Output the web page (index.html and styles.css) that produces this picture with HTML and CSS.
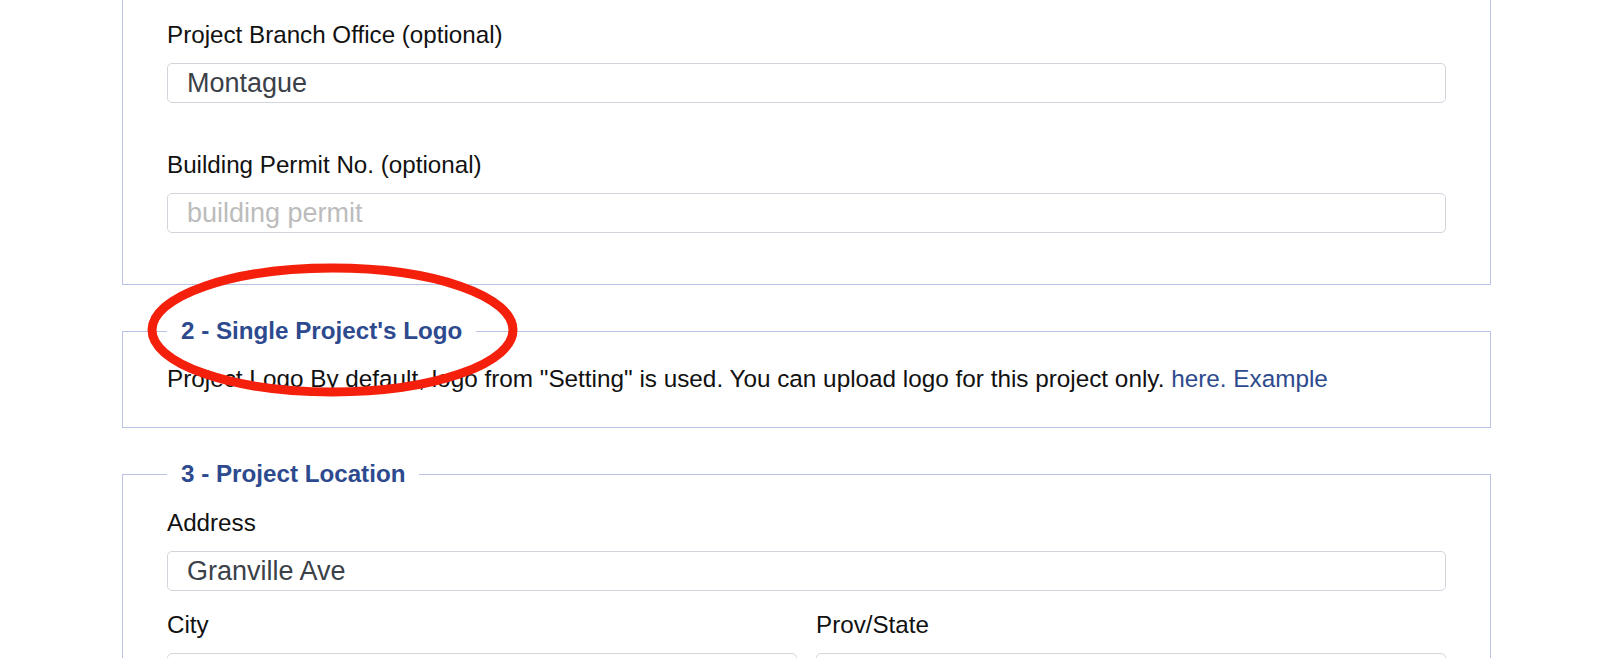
FILE: index.html
```html
<!DOCTYPE html>
<html lang="en">
<head>
<meta charset="utf-8">
<title>Project Settings</title>
<link rel="stylesheet" href="styles.css">
</head>
<body>
<main class="page">
  <fieldset class="section section-top">
    <div class="form-group">
      <label class="field-label" for="branch">Project Branch Office (optional)</label>
      <input class="field-input" id="branch" type="text" value="Montague">
    </div>
    <div class="form-group">
      <label class="field-label" for="permit">Building Permit No. (optional)</label>
      <input class="field-input" id="permit" type="text" placeholder="building permit">
    </div>
  </fieldset>

  <fieldset class="section section-logo">
    <legend class="section-title">2 - Single Project's Logo</legend>
    <p class="note">Project Logo By default, logo from "Setting" is used. You can upload logo for this project only. <a class="link" href="#">here.</a> <a class="link" href="#">Example</a></p>
  </fieldset>

  <fieldset class="section section-location">
    <legend class="section-title">3 - Project Location</legend>
    <div class="form-group">
      <label class="field-label" for="address">Address</label>
      <input class="field-input" id="address" type="text" value="Granville Ave">
    </div>
    <div class="form-row">
      <div class="form-group">
        <label class="field-label" for="city">City</label>
        <input class="field-input" id="city" type="text">
      </div>
      <div class="form-group">
        <label class="field-label" for="prov">Prov/State</label>
        <input class="field-input" id="prov" type="text">
      </div>
    </div>
  </fieldset>

  <svg class="annotation" width="1600" height="658" viewBox="0 0 1600 658" aria-hidden="true">
    <ellipse cx="332.5" cy="330" rx="180.5" ry="62" fill="none" stroke="#f5200c" stroke-width="9"/>
  </svg>
</main>
</body>
</html>
```
FILE: styles.css
```css
* {
  box-sizing: border-box;
}

html, body {
  margin: 0;
  height: 658px;
  overflow: hidden;
  background: #ffffff;
}

body {
  font-family: "Liberation Sans", Arial, Helvetica, sans-serif;
  color: #111111;
  position: relative;
}

.page {
  padding: 0 109px 0 122px;
}

.section {
  margin: 0 0 32px;
  border: 1px solid #b8c3e6;
  padding: 0 44px;
  min-width: 0;
}

.section-top {
  margin-top: -60px;
  padding-top: 80px;
  padding-bottom: 51px;
}

.section-top .form-group + .form-group {
  margin-top: 48px;
}

.section-title {
  font-weight: bold;
  font-size: 24.2px;
  line-height: 28px;
  color: #2d4a8e;
  padding: 0 14px;
}

.section-logo {
  padding-top: 20px;
  padding-bottom: 34px;
}

.note {
  margin: 0;
  font-size: 24.3px;
  line-height: 28px;
  color: #111111;
}

.link {
  color: #2d4a8e;
  text-decoration: none;
}

.section-location {
  padding-top: 21px;
  padding-bottom: 40px;
}

.section-location .form-group + .form-row {
  margin-top: 20px;
}

.form-row {
  display: grid;
  grid-template-columns: 1fr 1fr;
  column-gap: 19px;
}

.field-label {
  display: block;
  font-size: 24.2px;
  line-height: 28px;
  margin-bottom: 14px;
  color: #111111;
}

.field-input {
  display: block;
  width: 100%;
  height: 40px;
  border: 1px solid #d1d6dd;
  border-radius: 5px;
  padding: 0 19px;
  font-family: "Liberation Sans", Arial, Helvetica, sans-serif;
  font-size: 27px;
  color: #3b4148;
  background: #ffffff;
  outline: none;
}

.field-input::placeholder {
  color: #bcbcbc;
}

.annotation {
  position: absolute;
  left: 0;
  top: 0;
  pointer-events: none;
}
```
